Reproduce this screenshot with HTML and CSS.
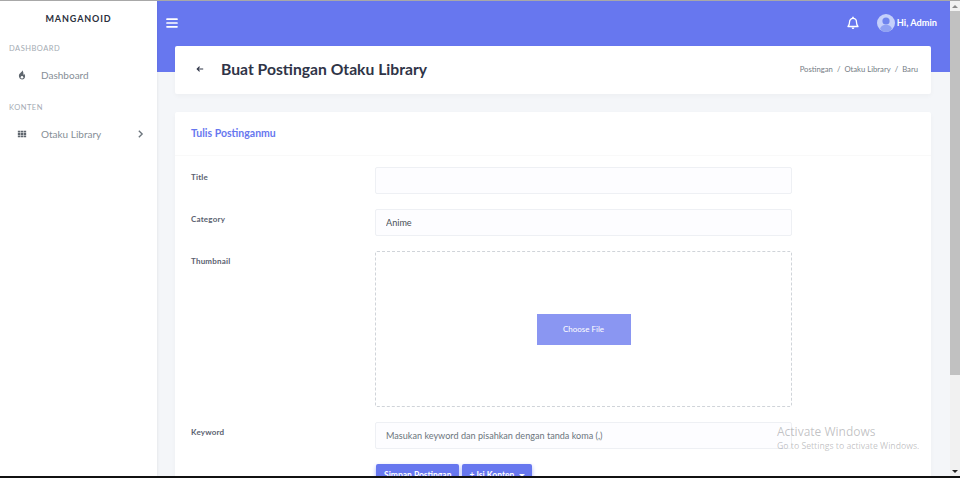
FILE: index.html
```html
<!DOCTYPE html>
<html lang="en">
<head>
    <meta charset="UTF-8">
    <meta name="viewport" content="width=device-width, initial-scale=1.0">
    <title>Buat Postingan Otaku Library</title>
    <link rel="stylesheet" href="styles.css">
</head>
<body>
    <div class="window">
        <aside class="sidebar">
            <div class="brand">MANGANOID</div>
            <div class="menu-header">DASHBOARD</div>
            <a class="menu-item">
                <svg class="menu-icon" viewBox="0 0 12 12"><path fill="#5f666e" d="M6.300.4c.3 2-3.500 3.400-4 6C1.900 9 3.800 11.400 6 11.400S10.100 9.200 9.700 6.800C9.500 5.700 8.900 4.900 8.400 4.400c0 .8-.3 1.300-.8 1.500C8 4 7.400 1.600 6.300.4z"/><circle cx="6" cy="8.800" r="1.500" fill="#fff"/></svg>
                <span>Dashboard</span>
            </a>
            <div class="menu-header">KONTEN</div>
            <a class="menu-item">
                <svg class="menu-icon" viewBox="0 0 12 10"><path fill="#5f666e" d="M1 1h2.900v2.200H1zM4.500 1h3v2.200h-3zM8.100 1H11v2.200H8.100zM1 3.900h2.900v2.200H1zM4.500 3.900h3v2.200h-3zM8.100 3.900H11v2.200H8.100zM1 6.800h2.900V9H1zM4.500 6.800h3V9h-3zM8.100 6.800H11V9H8.100z"/></svg>
                <span>Otaku Library</span>
                <svg class="menu-arrow" viewBox="0 0 8 12"><path fill="none" stroke="#6c757d" stroke-width="1.600" d="M2 2l4 4-4 4"/></svg>
            </a>
        </aside>

        <main class="main">
            <div class="navbar-bg"></div>
            <nav class="navbar">
                <svg class="burger" viewBox="0 0 12 10"><path fill="none" stroke="#fff" stroke-width="1.700" stroke-linecap="round" d="M1 1.200h10M1 5h10M1 8.800h10"/></svg>
                <svg class="bell" viewBox="0 0 14 14"><path fill="none" stroke="#fff" stroke-width="1.300" stroke-linejoin="round" d="M2 10.500c1-1 1.500-1.700 1.500-4.200C3.500 4 5 2.400 7 2.400s3.500 1.600 3.500 3.900c0 2.500.5 3.200 1.500 4.200z"/><path fill="#fff" d="M6.200.8h1.600v1.800H6.200zM5.600 11.500h2.800c0 .9-.6 1.500-1.400 1.500s-1.400-.6-1.400-1.500z"/></svg>
                <div class="user">
                    <svg class="avatar" viewBox="0 0 18 18"><circle cx="9" cy="9" r="9" fill="#c5d0fb"/><circle cx="9" cy="7" r="3.600" fill="#6f84ee"/><path fill="#8fa1f3" d="M3 15c.8-3 3-4.200 6-4.200s5.200 1.200 6 4.200c-1.600 1.900-3.700 3-6 3s-4.400-1.100-6-3z"/></svg>
                    <span>Hi, Admin</span>
                </div>
            </nav>

            <section class="section-header">
                <svg class="back" viewBox="0 0 10 10"><path fill="none" stroke="#2f3447" stroke-width="1.400" d="M9 5H1.500M4.500 2L1.500 5l3 3"/></svg>
                <h1>Buat Postingan Otaku Library</h1>
                <div class="breadcrumb">
                    <span>Postingan</span><i>/</i><span>Otaku Library</span><i>/</i><span>Baru</span>
                </div>
            </section>

            <section class="card">
                <div class="card-header">Tulis Postinganmu</div>
                <form class="card-body">
                    <label for="title">Title</label>
                    <input type="text" id="title" class="field">

                    <label for="category">Category</label>
                    <select id="category" class="field">
                        <option>Anime</option>
                    </select>

                    <label>Thumbnail</label>
                    <div class="dropzone">
                        <button type="button" class="choose-file">Choose File</button>
                    </div>

                    <label for="keyword">Keyword</label>
                    <input type="text" id="keyword" class="field" placeholder="Masukan keyword dan pisahkan dengan tanda koma (,)">

                    <div class="actions">
                        <button type="button" class="btn">Simpan Postingan</button>
                        <button type="button" class="btn">+ Isi Konten <b class="caret"></b></button>
                    </div>
                </form>
            </section>

            <div class="activate">
                <div class="activate-title">Activate Windows</div>
                <div class="activate-sub">Go to Settings to activate Windows.</div>
            </div>
        </main>

        <div class="scrollbar">
            <div class="scroll-btn"><b class="arrow-up"></b></div>
            <div class="scroll-thumb"></div>
            <div class="scroll-track"></div>
            <div class="scroll-btn"><b class="arrow-down"></b></div>
        </div>
    </div>
</body>
</html>
```

FILE: styles.css
```css
* {
    box-sizing: border-box;
}
html, body {
    height: 100%;
    margin: 0;
    overflow: hidden;
}
body {
    font-family: Lato, "Open Sans", sans-serif;
    background-color: #111;
    color: #6c757d;
    font-size: 9px;
}
.window {
    display: flex;
    height: 476px;
    border-top: 1px solid #a8a8a8;
    background-color: #f4f6f9;
    overflow: hidden;
}

/* sidebar */
.sidebar {
    width: 157px;
    flex-shrink: 0;
    background-color: #fff;
    box-shadow: 0 0 3px rgba(0, 0, 0, 0.1);
    z-index: 2;
}
.brand {
    margin-top: 12px;
    text-align: center;
    color: #2b2f3c;
    font-size: 9px;
    font-weight: 700;
    letter-spacing: 0.9px;
    line-height: 12px;
}
.menu-header {
    margin: 18px 0 0 9px;
    color: #a4abb3;
    font-size: 7.5px;
    letter-spacing: 0.5px;
    line-height: 12px;
}
.menu-header + .menu-item {
    margin-top: 11px;
}
.menu-item {
    display: flex;
    align-items: center;
    height: 18px;
    padding: 0 13px 0 17px;
    color: #868e96;
    font-size: 10px;
}
.menu-item + .menu-header {
    margin-top: 18px;
}
.menu-icon {
    width: 10px;
    height: 10px;
    margin-right: 14px;
}
.menu-arrow {
    width: 7px;
    height: 10px;
    margin-left: auto;
}

/* main */
.main {
    position: relative;
    flex: 1;
    min-width: 0;
    padding: 0 19px 0 18px;
}
.navbar-bg {
    position: absolute;
    top: 0;
    left: 0;
    right: 0;
    height: 71px;
    background-color: #6777ef;
}
.navbar {
    position: relative;
    display: flex;
    align-items: center;
    height: 43px;
    margin: 0 -6px 2px -9px;
}
.burger {
    width: 12px;
    height: 10px;
    margin-top: 1px;
}
.bell {
    width: 14px;
    height: 14px;
    margin-left: auto;
    margin-right: 17px;
}
.user {
    display: flex;
    align-items: center;
    gap: 2px;
    color: #fff;
    font-size: 9.2px;
    font-weight: 700;
}
.avatar {
    width: 18px;
    height: 18px;
}
.section-header {
    position: relative;
    display: flex;
    align-items: center;
    height: 48px;
    padding: 0 13px 2px 21px;
    background-color: #fff;
    border-radius: 2px;
    box-shadow: 0 2px 5px rgba(0, 0, 0, 0.03);
}
.back {
    width: 8px;
    height: 8px;
    margin-right: 17px;
}
.section-header h1 {
    margin: 0;
    color: #2f3447;
    font-size: 15.7px;
    font-weight: 700;
}
.breadcrumb {
    margin-left: auto;
    color: #757d85;
    font-size: 7.7px;
}
.breadcrumb i {
    margin: 0 4px;
    font-style: normal;
}
.card {
    position: relative;
    height: 400px;
    margin-top: 18px;
    background-color: #fff;
    border-radius: 2px;
    box-shadow: 0 2px 5px rgba(0, 0, 0, 0.03);
}
.card-header {
    height: 44px;
    padding: 0 16px;
    line-height: 43px;
    color: #6777ef;
    font-size: 10.5px;
    font-weight: 700;
    border-bottom: 1px solid #f9f9f9;
}
.card-body {
    display: grid;
    grid-template-columns: 184px 417px;
    row-gap: 15px;
    padding: 11px 15px 0 16px;
}
.card-body label {
    padding-top: 3px;
    color: #5a5f70;
    font-size: 8px;
    font-weight: 700;
    letter-spacing: 0.2px;
    line-height: 14px;
}
.field {
    display: block;
    width: 100%;
    height: 27px;
    padding: 0 10px;
    border: 1px solid #eef0f4;
    border-radius: 2px;
    background-color: #fdfdff;
    color: #495057;
    font-family: inherit;
    font-size: 9.1px;
    outline: none;
    appearance: none;
}
.field::placeholder {
    color: #6c757d;
}
.dropzone {
    display: flex;
    align-items: center;
    justify-content: center;
    height: 156px;
    border: 1px dashed #d0d4d9;
    border-radius: 2px;
}
.choose-file {
    width: 94px;
    height: 31px;
    border: none;
    background-color: #8a96f2;
    color: #fff;
    font-family: inherit;
    font-size: 8px;
}
.actions {
    grid-column: 2;
    display: flex;
    gap: 3px;
    margin-top: 0;
    padding-left: 1px;
}
.btn {
    height: 22px;
    padding: 0 8px;
    border: none;
    border-radius: 2px;
    background-color: #6777ef;
    box-shadow: 0 2px 4px #acb5f6;
    color: #fff;
    font-family: inherit;
    font-size: 8.5px;
    font-weight: 700;
}
.btn + .btn {
    width: 70px;
    padding: 0;
}
.caret {
    display: inline-block;
    margin-left: 3px;
    vertical-align: 1px;
    border-top: 3px solid #fff;
    border-left: 3px solid transparent;
    border-right: 3px solid transparent;
}

/* watermark */
.activate {
    position: absolute;
    top: 422px;
    left: 620px;
    color: rgba(120, 120, 125, 0.45);
    white-space: nowrap;
}
.activate-title {
    font-family: "Open Sans", sans-serif;
    font-size: 12px;
    line-height: 17px;
}
.activate-sub {
    font-family: "Open Sans", sans-serif;
    font-size: 8.7px;
    line-height: 13px;
}

/* scrollbar */
.scrollbar {
    display: flex;
    flex-direction: column;
    width: 10px;
    flex-shrink: 0;
    background-color: #f1f1f1;
}
.scroll-btn {
    display: flex;
    align-items: center;
    justify-content: center;
    height: 10px;
}
.scroll-thumb {
    height: 364px;
    background-color: #c1c1c1;
}
.scroll-track {
    flex: 1;
}
.arrow-up {
    border-bottom: 3px solid #8a8a8a;
    border-left: 3px solid transparent;
    border-right: 3px solid transparent;
}
.arrow-down {
    border-top: 3px solid #222;
    border-left: 3px solid transparent;
    border-right: 3px solid transparent;
}
```
